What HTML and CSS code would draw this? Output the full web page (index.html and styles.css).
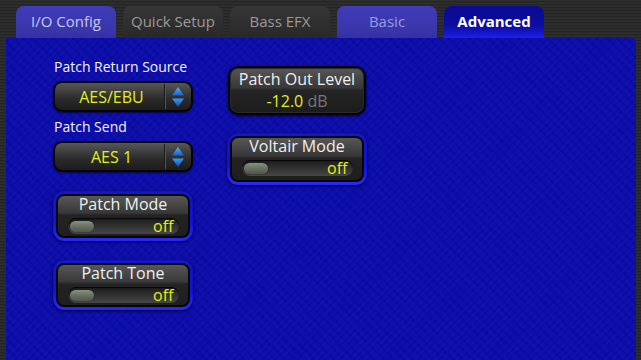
FILE: index.html
```html
<!DOCTYPE html>
<html>
<head>
<meta charset="utf-8">
<link rel="stylesheet" href="styles.css">
</head>
<body>
<div class="app">
  <div class="tabs">
    <div class="tab tab-lit">I/O Config</div>
    <div class="tab tab-dark">Quick Setup</div>
    <div class="tab tab-dark">Bass EFX</div>
    <div class="tab tab-lit tab-basic">Basic</div>
    <div class="tab tab-active">Advanced</div>
  </div>
  <div class="panel">
    <div class="col col-left">
      <div class="label">Patch Return Source</div>
      <div class="select">
        <span class="select-val">AES/EBU</span>
        <span class="spin">
          <svg width="14" height="22" viewBox="0 0 14 22">
            <defs>
              <linearGradient id="gu" x1="0" y1="0" x2="0" y2="1">
                <stop offset="0" stop-color="#5ab4ff"/>
                <stop offset="1" stop-color="#1660c8"/>
              </linearGradient>
              <linearGradient id="gd" x1="0" y1="0" x2="0" y2="1">
                <stop offset="0" stop-color="#3a9cf4"/>
                <stop offset="1" stop-color="#0e4aa8"/>
              </linearGradient>
            </defs>
            <polygon points="7,1 13,9.5 1,9.5" fill="url(#gu)"/>
            <polygon points="1,12.5 13,12.5 7,21" fill="url(#gd)"/>
          </svg>
        </span>
      </div>
      <div class="label label-2">Patch Send</div>
      <div class="select">
        <span class="select-val">AES 1</span>
        <span class="spin">
          <svg width="14" height="22" viewBox="0 0 14 22">
            <polygon points="7,1 13,9.5 1,9.5" fill="url(#gu)"/>
            <polygon points="1,12.5 13,12.5 7,21" fill="url(#gd)"/>
          </svg>
        </span>
      </div>
      <div class="tbox tbox-first">
        <div class="tinner">
          <div class="ttl">Patch Mode</div>
          <div class="track"><span class="knob"></span><span class="off">off</span></div>
        </div>
      </div>
      <div class="tbox tbox-next">
        <div class="tinner">
          <div class="ttl">Patch Tone</div>
          <div class="track"><span class="knob"></span><span class="off">off</span></div>
        </div>
      </div>
    </div>
    <div class="col col-right">
      <div class="level">
        <div class="ttl">Patch Out Level</div>
        <div class="level-val"><span class="num">-12.0</span> <span class="unit">dB</span></div>
      </div>
      <div class="tbox tbox-volt">
        <div class="tinner">
          <div class="ttl">Voltair Mode</div>
          <div class="track"><span class="knob"></span><span class="off">off</span></div>
        </div>
      </div>
    </div>
  </div>
</div>
</body>
</html>
```
FILE: styles.css
```css
html, body {
  margin: 0;
  padding: 0;
  width: 641px;
  height: 360px;
  overflow: hidden;
}
body {
  font-family: "Open Sans", "DejaVu Sans", sans-serif;
  background-color: #2a2a2a;
  background-image: repeating-linear-gradient(180deg, #2e2e2e 0, #2e2e2e 1px, #252525 1px, #252525 2px, #2b2b2b 2px, #2b2b2b 3px);
}
.app {
  width: 641px;
  height: 360px;
  display: flex;
  flex-direction: column;
}
.tabs {
  display: flex;
  gap: 7px;
  padding: 6px 0 0 16px;
  height: 32px;
}
.tab {
  width: 100px;
  height: 32px;
  box-sizing: border-box;
  border-radius: 8px 8px 0 0;
  text-align: center;
  font-size: 15px;
  line-height: 31px;
  padding-bottom: 1px;
}
.tab-lit {
  background: linear-gradient(180deg, #3f3bb6 0%, #3a36ac 70%, #3531a4 100%);
  color: #c9c8f2;
}
.tab-basic {
  color: #9c9ae2;
}
.tab-dark {
  background: linear-gradient(180deg, #363636 0%, #2e2e2e 60%, #282828 100%);
  color: #9a9a9a;
}
.tab-active {
  background: linear-gradient(180deg, #0a0a92 0%, #0c0ca0 60%, #1818d8 90%, #2020e8 100%);
  color: #ffffff;
  font-weight: bold;
}
.panel {
  margin-left: 6px;
  width: 630px;
  flex: 1;
  border-top-right-radius: 4px;
  background-color: #0b0baa;
  background-image:
    repeating-linear-gradient(135deg, rgba(255,255,255,0.012) 0, rgba(255,255,255,0.012) 2px, rgba(0,0,0,0.018) 2px, rgba(0,0,0,0.018) 5px),
    repeating-linear-gradient(45deg, rgba(0,0,0,0.015) 0, rgba(0,0,0,0.015) 3px, rgba(255,255,255,0.01) 3px, rgba(255,255,255,0.01) 7px);
  display: flex;
  align-items: flex-start;
  padding-left: 47px;
  box-sizing: border-box;
  gap: 34px;
}
.col {
  display: flex;
  flex-direction: column;
}
.col-left {
  width: 140px;
  padding-top: 21px;
}
.col-right {
  width: 140px;
  padding-top: 28px;
  align-items: center;
}
.label {
  color: #f2f2f2;
  font-size: 14px;
  line-height: 16px;
  padding-left: 1px;
  margin-bottom: 6px;
  white-space: nowrap;
}
.label-2 {
  margin-top: 7px;
}
.select {
  height: 31px;
  box-sizing: border-box;
  border: 2px solid #050505;
  border-radius: 9px;
  background: linear-gradient(180deg, #575757 0%, #3c3c3c 35%, #2a2a2a 60%, #1c1c1c 100%);
  box-shadow: 0 1px 2px rgba(0,0,0,0.6);
  display: flex;
  align-items: center;
}
.select-val {
  flex: 1;
  text-align: center;
  color: #e6ee14;
  font-size: 16px;
  line-height: 20px;
  padding-left: 4px;
}
.spin {
  width: 26px;
  height: 25px;
  border-left: 1px solid #1a1a1a;
  box-shadow: inset 1px 0 0 #555;
  display: flex;
  align-items: center;
  justify-content: center;
}
.spin svg {
  display: block;
}
.tbox {
  width: 140px;
  height: 50px;
  box-sizing: border-box;
  padding: 3px;
  border-radius: 11px;
  background: linear-gradient(180deg, #1616c8 0%, #1212d4 60%, #2a2aff 100%);
  box-shadow: inset 0 0 1px #000060, 0 1px 3px rgba(0,0,0,0.7);
}
.tbox-first {
  margin-top: 19px;
}
.tbox-next {
  margin-top: 19px;
}
.tbox-volt {
  margin-top: 18px;
  height: 52px;
}
.tinner {
  height: 100%;
  box-sizing: border-box;
  border: 2px solid #070707;
  border-radius: 8px;
  background: linear-gradient(180deg, #575757 0%, #444 25%, #383838 42%, #232323 48%, #1e1e1e 100%);
  display: flex;
  flex-direction: column;
  align-items: center;
}
.ttl {
  color: #f0f0f0;
  font-size: 16px;
  line-height: 17px;
  white-space: nowrap;
}
.track {
  margin-top: 5px;
  width: 111px;
  height: 16px;
  box-sizing: border-box;
  border-radius: 8px;
  background: linear-gradient(180deg, #1a1a1a 0%, #2c2c2c 40%, #474747 100%);
  box-shadow: inset 0 1px 1px rgba(0,0,0,0.8);
  display: flex;
  align-items: center;
  justify-content: space-between;
  padding: 0 5px 0 2px;
}
.knob {
  width: 24px;
  height: 11px;
  border-radius: 6px;
  background: linear-gradient(180deg, #8b9282 0%, #6c7264 45%, #50564a 100%);
  box-shadow: 0 0 1px #000;
}
.off {
  color: #e6ee14;
  font-size: 16px;
  line-height: 16px;
}
.level {
  width: 138px;
  height: 49px;
  box-sizing: border-box;
  border: 2px solid #050505;
  border-radius: 10px;
  background: linear-gradient(180deg, #575757 0%, #444 25%, #383838 44%, #242424 50%, #1c1c1c 100%);
  box-shadow: 0 1px 3px rgba(0,0,0,0.7), inset 0 0 0 1px #2a2a2a;
  display: flex;
  flex-direction: column;
  align-items: center;
  padding-top: 3px;
}
.level-val {
  font-size: 16px;
  line-height: 20px;
  margin-top: 3px;
  white-space: nowrap;
}
.num {
  color: #e6ee14;
}
.unit {
  color: #777;
}
```
